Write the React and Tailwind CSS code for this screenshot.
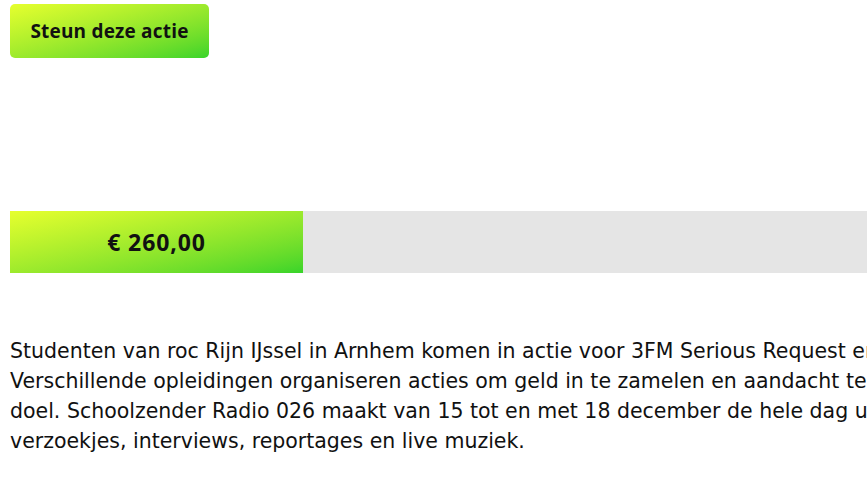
const App = () => {
  const raised = 260;
  const goal = 905;

  return (
    <div className="w-[867px] h-[488px] overflow-hidden bg-white" style={{ fontFamily: '"Open Sans", "Liberation Sans", sans-serif' }}>
      <div className="w-[1100px] px-[10px]">
        <div className="pt-1">
          <button
            type="button"
            className="h-[54px] w-[199px] rounded-[5px] bg-gradient-to-br from-[#e6ff2e] to-[#36d42a] text-[19px] font-bold tracking-[0.2px] text-[#111]"
          >
            Steun deze actie
          </button>
        </div>

        <div className="mt-[153px] h-[62px] bg-[#e5e5e5]">
          <div
            className="flex h-full items-center justify-center bg-gradient-to-br from-[#e6ff2e] to-[#36d42a] text-[23px] font-bold tracking-[0.9px] text-[#111]"
            style={{ width: `${(raised / goal) * 1020}px` }}
          >
            € 260,00
          </div>
        </div>

        <p className="mt-[63px] whitespace-nowrap text-[20.5px] leading-[30px] text-[#111]" style={{ fontFamily: '"DejaVu Sans", sans-serif' }}>
          Studenten van roc Rijn IJssel in Arnhem komen in actie voor 3FM Serious Request en het Rode Kruis.<br />
          Verschillende opleidingen organiseren acties om geld in te zamelen en aandacht te vragen voor het goede<br />
          doel. Schoolzender Radio 026 maakt van 15 tot en met 18 december de hele dag uitzendingen met<br />
          verzoekjes, interviews, reportages en live muziek.
        </p>
      </div>
    </div>
  );
};

export default App;
